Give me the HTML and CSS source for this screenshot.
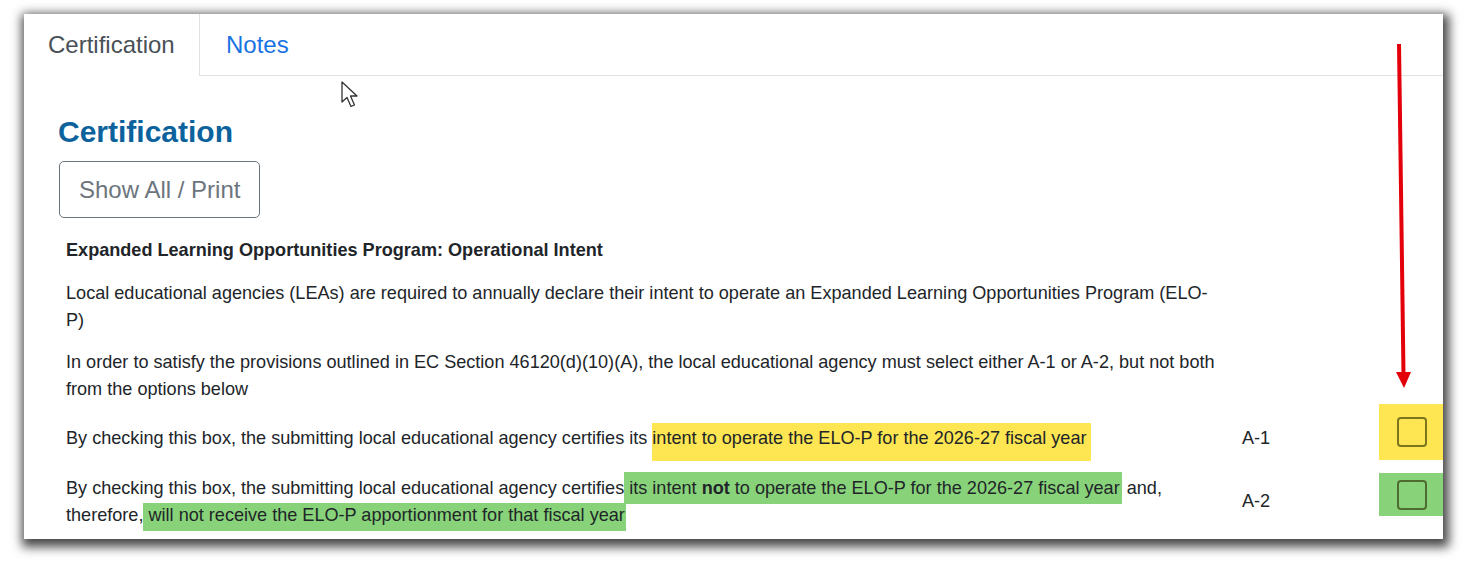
FILE: index.html
```html
<!DOCTYPE html>
<html lang="en">

<head>
  <meta charset="UTF-8">
  <meta name="viewport" content="width=device-width, initial-scale=1.0">
  <title>Certification</title>
  <link rel="stylesheet" href="styles.css">
</head>

<body>
  <div class="frame">
    <div class="tabs">
      <div class="tab active">Certification</div>
      <a class="tab" href="#">Notes</a>
    </div>

    <div class="content">
      <h2 class="title">Certification</h2>
      <button class="print-btn">Show All / Print</button>

      <div class="cert">
        <p class="cert-head">Expanded Learning Opportunities Program: Operational Intent</p>
        <p class="cert-text">Local educational agencies (LEAs) are required to annually declare their intent to operate an Expanded Learning Opportunities Program (ELO-P)</p>
        <p class="cert-text last">In order to satisfy the provisions outlined in EC Section 46120(d)(10)(A), the local educational agency must select either A-1 or A-2, but not both from the options below</p>

        <div class="option first">
          <div class="option-text">By checking this box, the submitting local educational agency certifies its <span class="hl-yellow">intent to operate the ELO-P for the 2026-27 fiscal year</span></div>
          <div class="option-code">A-1</div>
          <div class="option-check yellow"><span class="box"></span></div>
        </div>

        <div class="option second">
          <div class="option-text">By checking this box, the submitting local educational agency certifies<span class="hl-green top"> its intent <b>not</b> to operate the ELO-P for the 2026-27 fiscal year</span> and, therefore,<span class="hl-green bottom"> will not receive the ELO-P apportionment for that fiscal year</span></div>
          <div class="option-code">A-2</div>
          <div class="option-check green"><span class="box"></span></div>
        </div>
      </div>
    </div>

    <!-- annotations drawn over the screenshot -->
    <svg class="marks" viewBox="0 0 1419 525" width="1419" height="525">
      <line x1="1375" y1="30" x2="1379.5" y2="360" stroke="#e3000b" stroke-width="4" />
      <polygon points="1372,358 1387,358 1380,374" fill="#e3000b" />
      <path d="M318 68 L318 88 L323 83.5 L327 92.5 L330.5 91 L326.5 82 L333 82 Z" fill="#fff" stroke="#333" stroke-width="1.3" stroke-linejoin="round" />
    </svg>
  </div>
</body>

</html>
```

FILE: styles.css
```css
* {
  box-sizing: border-box;
}

html,
body {
  height: 562px;
}

body {
  margin: 0;
  padding-top: 14px;
  background: #fff;
  font-family: "Liberation Sans", Arial, sans-serif;
  color: #212529;
  overflow: hidden;
}

.frame {
  position: relative;
  margin-left: 24px;
  width: 1419px;
  height: 525px;
  background: #fff;
  overflow: hidden;
  box-shadow: 2px 4px 10px 4px rgba(0, 0, 0, .72);
}

.tabs {
  display: flex;
  height: 62px;
  border-bottom: 1px solid #dee2e6;
}

.tab {
  display: flex;
  align-items: center;
  height: 62px;
  font-size: 24px;
  text-decoration: none;
  color: #1a73e3;
  padding: 0 0 0 26px;
}

.tab.active {
  width: 176px;
  padding-left: 24px;
  padding-bottom: 1px;
  color: #495057;
  background: #fff;
  border-right: 1px solid #dee2e6;
}

.content {
  padding-left: 34px;
}

.title {
  margin: 38px 0 11px;
  font-size: 30px;
  line-height: 36px;
  font-weight: bold;
  color: #0b629c;
}

.print-btn {
  display: block;
  height: 57px;
  margin-left: 1px;
  padding: 0 19px;
  font-family: inherit;
  font-size: 24px;
  color: #6c757d;
  background: #fff;
  border: 1px solid #6c757d;
  border-radius: 5px;
}

.cert {
  padding-left: 8px;
  font-size: 18.1px;
  line-height: 27px;
}

.cert p {
  margin: 0;
  width: 1152px;
}

.cert-head {
  margin-top: 19px !important;
  margin-bottom: 16px !important;
  font-weight: bold;
}

.cert-text {
  margin-bottom: 15px !important;
}

.cert-text.last {
  margin-bottom: 1px !important;
}

.option {
  display: grid;
  grid-template-columns: 1152px 161px 80px;
  align-items: start;
}

.option.second {
  margin-top: 13px;
}

.option-code {
  padding-left: 24px;
}

.first .option-text,
.first .option-code {
  padding-top: 21px;
}

.second .option-text {
  padding-top: 2px;
}

.second .option-code {
  align-self: center;
}

.option-check {
  display: flex;
  align-items: center;
  padding-left: 18px;
}

.option-check.yellow {
  height: 56px;
  background: #fde652;
}

.option-check.green {
  height: 43px;
  background: #88d379;
}

.box {
  width: 30px;
  height: 30px;
  border: 2px solid rgba(40, 40, 0, .6);
  border-radius: 4px;
}

.hl-yellow {
  background: #fde652;
  padding: 5px 4px 13px 0;
}

.hl-green {
  background: #88d379;
}

.hl-green.top {
  padding: 6px 2px 6px 0;
}

.hl-green.bottom {
  padding: 2px 1px 6px 0;
}

.marks {
  position: absolute;
  top: 0;
  left: 0;
  pointer-events: none;
}
```
